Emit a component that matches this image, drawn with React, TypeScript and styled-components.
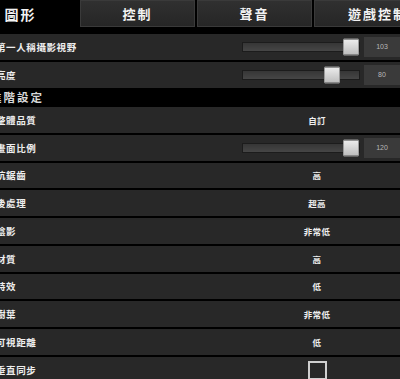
import styled, { createGlobalStyle } from "styled-components";

const GlobalStyle = createGlobalStyle`
  html, body {
    margin: 0;
    background: #000;
  }
  body {
    font-family: "Noto Sans CJK TC", "Noto Sans", sans-serif;
    overflow: hidden;
  }
`;

type Setting =
  | { label: string; kind: "slider"; value: number; pos: number }
  | { label: string; kind: "text"; value: string }
  | { label: string; kind: "check" };

const tabs = ["圖形", "控制", "聲音", "遊戲控制"];

const basic: Setting[] = [
  { label: "第一人稱攝影視野", kind: "slider", value: 103, pos: 1 },
  { label: "亮度", kind: "slider", value: 80, pos: 0.81 },
];

const advanced: Setting[] = [
  { label: "整體品質", kind: "text", value: "自訂" },
  { label: "畫面比例", kind: "slider", value: 120, pos: 1 },
  { label: "抗鋸齒", kind: "text", value: "高" },
  { label: "後處理", kind: "text", value: "超高" },
  { label: "陰影", kind: "text", value: "非常低" },
  { label: "材質", kind: "text", value: "高" },
  { label: "特效", kind: "text", value: "低" },
  { label: "樹葉", kind: "text", value: "非常低" },
  { label: "可視距離", kind: "text", value: "低" },
  { label: "垂直同步", kind: "check" },
];

const SettingRow = ({ item }: { item: Setting }) => (
  <Row>
    <Label>{item.label}</Label>
    <Control>
      {item.kind === "slider" && (
        <Slider>
          <Track>
            <Thumb style={{ left: `calc((100% - 16px) * ${item.pos})` }} />
          </Track>
          <ValueBox>{item.value}</ValueBox>
        </Slider>
      )}
      {item.kind === "text" && <Value>{item.value}</Value>}
      {item.kind === "check" && <CheckBox />}
    </Control>
  </Row>
);

const App = () => {
  return (
    <Screen>
      <GlobalStyle />
      <TabBar>
        {tabs.map((t, i) => (
          <Tab key={t} $active={i === 0}>
            {t}
          </Tab>
        ))}
      </TabBar>
      <List>
        {basic.map((s) => (
          <SettingRow key={s.label} item={s} />
        ))}
        <SectionHeader>
          <HeaderText>進階設定</HeaderText>
        </SectionHeader>
        {advanced.map((s) => (
          <SettingRow key={s.label} item={s} />
        ))}
      </List>
    </Screen>
  );
};

const Screen = styled.div`
  width: 400px;
  height: 379px;
  overflow: hidden;
  background: #000;
`;

const TabBar = styled.div`
  display: flex;
  gap: 2px;
  height: 27px;
  margin-left: -37px;
`;

const Tab = styled.div<{ $active?: boolean }>`
  flex: 0 0 115px;
  box-sizing: border-box;
  display: flex;
  align-items: center;
  justify-content: center;
  background: ${(p) => (p.$active ? "#000" : "linear-gradient(#303030, #262626)")};
  border: 1px solid ${(p) => (p.$active ? "#000" : "#3a3a3a")};
  color: #f2f2f2;
  font-size: ${(p) => (p.$active ? "14px" : "13px")};
  font-weight: 700;
  letter-spacing: 2px;
  white-space: nowrap;

  &:last-child {
    flex-basis: 128px;
  }
`;

const List = styled.div`
  display: flex;
  flex-direction: column;
  gap: 2px;
  margin-top: 7px;
`;

const Row = styled.div`
  height: 25.75px;
  flex-shrink: 0;
  display: flex;
  align-items: center;
  justify-content: space-between;
  background: #282828;
`;

const Label = styled.div`
  margin-left: -4px;
  color: #eeeeee;
  font-size: 9.5px;
  font-weight: 700;
  letter-spacing: 0.6px;
  white-space: nowrap;
`;

const Control = styled.div`
  width: 166px;
  flex-shrink: 0;
  height: 100%;
  display: flex;
  align-items: center;
  justify-content: center;
`;

const Slider = styled.div`
  flex: 1;
  display: flex;
  align-items: center;
  gap: 4px;
  padding-left: 8px;
`;

const Track = styled.div`
  flex: 1;
  position: relative;
  height: 10px;
  box-sizing: border-box;
  border: 1px solid #1c1c1c;
  background: linear-gradient(#363636, #464646);
`;

const Thumb = styled.div`
  position: absolute;
  top: 50%;
  transform: translateY(-50%);
  width: 16px;
  height: 17px;
  box-sizing: border-box;
  border: 1px solid #9a9a9a;
  border-radius: 1px;
  background: linear-gradient(#ececec, #bdbdbd);
`;

const ValueBox = styled.div`
  width: 36px;
  height: 20px;
  display: flex;
  align-items: center;
  justify-content: center;
  background: #3a3a3a;
  color: #b8b8b8;
  font-family: "Liberation Sans", sans-serif;
  font-size: 7px;
`;

const Value = styled.div`
  color: #eeeeee;
  font-size: 8.5px;
  font-weight: 700;
  letter-spacing: 0.3px;
`;

const CheckBox = styled.div`
  width: 19px;
  height: 19px;
  box-sizing: border-box;
  border: 2px solid #cfcfcf;
  margin-top: 2px;
`;

const SectionHeader = styled.div`
  height: 15.5px;
  flex-shrink: 0;
  display: flex;
  align-items: center;
  background: #000;
`;

const HeaderText = styled.div`
  margin-left: -10px;
  color: #d8d8d8;
  font-size: 11.5px;
  font-weight: 700;
  letter-spacing: 2px;
`;

export default App;
